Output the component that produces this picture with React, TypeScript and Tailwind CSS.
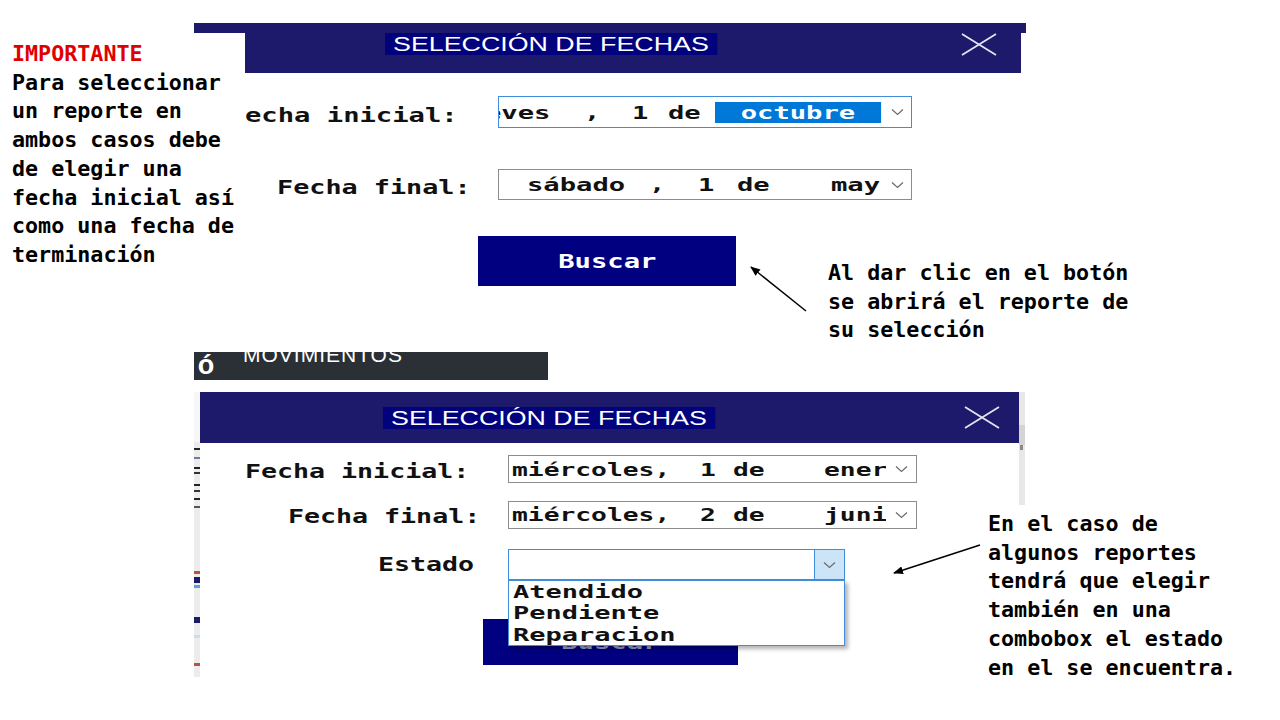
import React from 'react';

const mono = "font-['DejaVu_Sans_Mono',monospace] font-bold";
const note = "font-['DejaVu_Sans_Mono',monospace] font-bold text-[21.7px] leading-[28.7px] text-black whitespace-pre";

const Wide: React.FC<{ children: React.ReactNode; className?: string }> = ({ children, className = '' }) => (
  <span className={`inline-block whitespace-pre ${className}`}>{children}</span>
);

const Chevron: React.FC = () => (
  <svg width="13" height="8" viewBox="0 0 13 8" fill="none">
    <path d="M1 1.5 L6.5 6.5 L12 1.5" stroke="#6b6b6b" strokeWidth="1.2" />
  </svg>
);

const CloseX: React.FC = () => (
  <svg width="36" height="23" viewBox="0 0 36 23" fill="none">
    <path d="M1 1 L35 22 M35 1 L1 22" stroke="#e4e4ee" strokeWidth="1.8" />
  </svg>
);

const Title: React.FC = () => (
  <span className="inline-block origin-left scale-x-[1.34] bg-[#02027c] px-[6px] h-[22px] leading-[22px] text-[20px] text-white font-['Liberation_Sans',Arial,sans-serif]">
    SELECCIÓN DE FECHAS
  </span>
);

// one piece of a date picker field, in a slot of fixed width
const Part: React.FC<{ w: string; children: React.ReactNode }> = ({ w, children }) => (
  <span className={`shrink-0 ${w}`}>
    <Wide className="origin-left scale-x-[1.51] text-[18px]">{children}</Wide>
  </span>
);

const SmallPart: React.FC<{ w: string; children: React.ReactNode }> = ({ w, children }) => (
  <span className={`shrink-0 ${w}`}>
    <Wide className="origin-left scale-x-[1.46] text-[18px]">{children}</Wide>
  </span>
);

const TopDialog: React.FC = () => (
  <div className="absolute left-[194px] top-[23px] w-[832px]">
    {/* header */}
    <div className="flex items-start">
      <div className="w-[51px] h-[10px] bg-[#1d1a6c]" />
      <div className="w-[776px] h-[50px] bg-[#1d1a6c] flex items-start justify-between pt-[10px] pl-[140px] pr-[24px]">
        <Title />
        <CloseX />
      </div>
      <div className="w-[5px] h-[10px] bg-[#1d1a6c]" />
    </div>

    {/* body */}
    <div className={`pl-[51px] ${mono} text-[#111]`}>
      <div className="mt-[23px] flex items-center">
        <div className="w-[253px] text-[19px]">
          <Wide className="origin-left scale-x-[1.43] translate-y-[3px]">echa inicial:</Wide>
        </div>
        <div className="w-[414px] h-[32px] border border-[#3f8ddb] flex items-center bg-white">
          <div className="flex-1 overflow-hidden h-full flex items-center">
            <span className="shrink-0 w-[86px] -ml-[14px]">
              <Wide className="origin-left scale-x-[1.51] text-[18px]">eves</Wide>
            </span>
            <span className="shrink-0 w-[61px] pl-[13px]">
              <Wide className="origin-left scale-x-[1.51] text-[18px]">,</Wide>
            </span>
            <Part w="w-[36px]">1</Part>
            <Part w="w-[47px]">de</Part>
            <span className="shrink-0">
              <Wide className="origin-left scale-x-[1.51] text-[18px]">
                <span className="inline-block bg-[#0078d7] text-white px-[17px] h-[21px] leading-[21px]">octubre</span>
              </Wide>
            </span>
          </div>
          <div className="w-[28px] flex justify-center">
            <Chevron />
          </div>
        </div>
      </div>

      <div className="mt-[41px] flex items-center">
        <div className="w-[253px] pl-[32px] text-[19px]">
          <Wide className="origin-left scale-x-[1.41] translate-y-[3px]">Fecha final:</Wide>
        </div>
        <div className="w-[414px] h-[31px] border border-[#8c8c8c] flex items-center bg-white">
          <div className="w-[384px] overflow-hidden h-full flex items-center pl-[28px]">
            <Part w="w-[122px]">sábado</Part>
            <Part w="w-[49px]">,</Part>
            <Part w="w-[39px]">1</Part>
            <Part w="w-[94px]">de</Part>
            <Part w="w-[60px]">may</Part>
          </div>
          <div className="flex-1 flex justify-center">
            <Chevron />
          </div>
        </div>
      </div>

      <div className="mt-[36px] ml-[233px] w-[258px] h-[50px] bg-[#000080] flex items-center justify-center text-white text-[19px]">
        <Wide className="origin-center scale-x-[1.43]">Buscar</Wide>
      </div>
    </div>
  </div>
);

const DarkStrip: React.FC = () => (
  <div className="absolute left-[194px] top-[352px] w-[354px] h-[28px] bg-[#2b2f36] overflow-hidden flex items-start">
    <div className="w-[24px] flex justify-center">
      <span className="mt-[-2px] text-white font-['Liberation_Sans',sans-serif] font-bold text-[27px] leading-[30px]">ó</span>
    </div>
    <span className="ml-[25px] mt-[-8px] text-white font-['Liberation_Sans',sans-serif] text-[21px] leading-[22px] tracking-[1px]">
      MOVIMIENTOS
    </span>
  </div>
);

const LeftStrip: React.FC = () => (
  <div className="w-[6px] h-[285px] bg-[#ececec] flex flex-col">
    <div className="h-[50px] bg-[#f7f7f7]" />
    <div className="mt-[6px] h-[2px] bg-[#222]" />
    <div className="mt-[7px] h-[2px] bg-[#6b7aa8]" />
    <div className="mt-[8px] h-[2px] bg-[#222]" />
    <div className="mt-[3px] h-[2px] bg-[#333]" />
    <div className="mt-[10px] h-[2px] bg-[#222]" />
    <div className="mt-[4px] h-[2px] bg-[#333]" />
    <div className="mt-[6px] h-[2px] bg-[#222]" />
    <div className="mt-[6px] h-[2px] bg-[#555]" />
    <div className="mt-[63px] h-[3px] bg-[#b8533c]" />
    <div className="mt-[3px] h-[6px] bg-[#1d1a6c]" />
    <div className="mt-[2px] h-[3px] bg-[#5aa0dc]" />
    <div className="mt-[29px] h-[6px] bg-[#1d1a6c]" />
    <div className="mt-[12px] h-[3px] bg-[#c7ddf0]" />
    <div className="mt-[25px] h-[3px] bg-[#b8533c]" />
  </div>
);

const BottomDialog: React.FC = () => (
  <div className="absolute left-[194px] top-[392px] w-[832px] flex items-start">
    <LeftStrip />
    <div className="w-[819px]">
      <div className="h-[51px] bg-[#1d1a6c] flex items-center justify-between pl-[183px] pr-[19px]">
        <Title />
        <CloseX />
      </div>

      <div className={`${mono} text-[#111]`}>
        <div className="mt-[12px] flex items-center">
          <div className="w-[308px] pl-[45px] text-[19px]">
            <Wide className="origin-left scale-x-[1.4] translate-y-[2px]">Fecha inicial:</Wide>
          </div>
          <div className="w-[409px] h-[28px] border border-[#8c8c8c] flex items-center bg-white">
            <div className="w-[377px] overflow-hidden h-full flex items-center pl-[3px]">
              <SmallPart w="w-[188px]">miércoles,</SmallPart>
              <SmallPart w="w-[33px]">1</SmallPart>
              <SmallPart w="w-[91px]">de</SmallPart>
              <SmallPart w="w-[80px]">enero</SmallPart>
            </div>
            <div className="flex-1 flex justify-center">
              <Chevron />
            </div>
          </div>
        </div>

        <div className="mt-[17px] flex items-center">
          <div className="w-[308px] pl-[88px] text-[19px]">
            <Wide className="origin-left scale-x-[1.4] translate-y-[1px]">Fecha final:</Wide>
          </div>
          <div className="w-[409px] h-[28px] border border-[#8c8c8c] flex items-center bg-white">
            <div className="w-[377px] overflow-hidden h-full flex items-center pl-[3px]">
              <SmallPart w="w-[188px]">miércoles,</SmallPart>
              <SmallPart w="w-[33px]">2</SmallPart>
              <SmallPart w="w-[91px]">de</SmallPart>
              <SmallPart w="w-[80px]">junio</SmallPart>
            </div>
            <div className="flex-1 flex justify-center">
              <Chevron />
            </div>
          </div>
        </div>

        <div className="mt-[20px] flex items-center">
          <div className="w-[308px] pl-[178px] text-[19px]">
            <Wide className="origin-left scale-x-[1.4]">Estado</Wide>
          </div>
          <div className="relative w-[337px] h-[31px] border border-[#3f8ddb] bg-white flex justify-end">
            <div className="w-[30px] h-full bg-[#cce4f7] border-l border-[#3f8ddb] flex items-center justify-center">
              <Chevron />
            </div>
            <div className="absolute left-[-1px] top-[30px] z-10 w-[337px] h-[66px] border border-[#3f8ddb] bg-white shadow-[3px_3px_4px_rgba(0,0,0,0.3)] pl-[4px] text-[18px] leading-[21.3px]">
              <div><Wide className="origin-left scale-x-[1.5]">Atendido</Wide></div>
              <div><Wide className="origin-left scale-x-[1.5]">Pendiente</Wide></div>
              <div><Wide className="origin-left scale-x-[1.5]">Reparacion</Wide></div>
            </div>
          </div>
        </div>

        <div className="mt-[39px] ml-[283px] w-[255px] h-[46px] bg-[#000080] flex items-center justify-center text-[#9aa0c8] text-[19px]">
          <Wide className="origin-center scale-x-[1.43]">Buscar</Wide>
        </div>
      </div>
    </div>
    <div className="w-[6px] h-[113px] bg-[#e8e8e8] flex flex-col">
      <div className="mt-[33px] h-[20px] bg-[#d4d4d4]" />
      <div className="h-[5px] w-[3px] ml-[1px] bg-[#888]" />
    </div>
  </div>
);

const Arrows: React.FC = () => (
  <svg className="absolute left-0 top-0 pointer-events-none" width="1280" height="720" viewBox="0 0 1280 720">
    <defs>
      <marker id="ah" markerWidth="10" markerHeight="8" refX="9" refY="4" orient="auto" markerUnits="userSpaceOnUse">
        <path d="M0 0 L10 4 L0 8 Z" fill="#000" />
      </marker>
    </defs>
    <line x1="806" y1="311" x2="751" y2="267" stroke="#000" strokeWidth="1.5" markerEnd="url(#ah)" />
    <line x1="980" y1="545" x2="894" y2="573" stroke="#000" strokeWidth="1.5" markerEnd="url(#ah)" />
  </svg>
);

const App: React.FC = () => {
  return (
    <div className="relative w-[1280px] h-[720px] bg-white overflow-hidden">
      {/* left note */}
      <div className={`absolute left-[12px] top-[40px] ${note}`}>
        <div className="text-[#e00000]">IMPORTANTE</div>
        <div>Para seleccionar</div>
        <div>un reporte en</div>
        <div>ambos casos debe</div>
        <div>de elegir una</div>
        <div>fecha inicial así</div>
        <div>como una fecha de</div>
        <div>terminación</div>
      </div>

      <TopDialog />
      <DarkStrip />
      <BottomDialog />

      <div className={`absolute left-[828px] top-[259px] ${note}`}>
        <div>Al dar clic en el botón</div>
        <div>se abrirá el reporte de</div>
        <div>su selección</div>
      </div>

      <div className={`absolute left-[988px] top-[510px] ${note}`}>
        <div>En el caso de</div>
        <div>algunos reportes</div>
        <div>tendrá que elegir</div>
        <div>también en una</div>
        <div>combobox el estado</div>
        <div>en el se encuentra.</div>
      </div>

      <Arrows />
    </div>
  );
};

export default App;
